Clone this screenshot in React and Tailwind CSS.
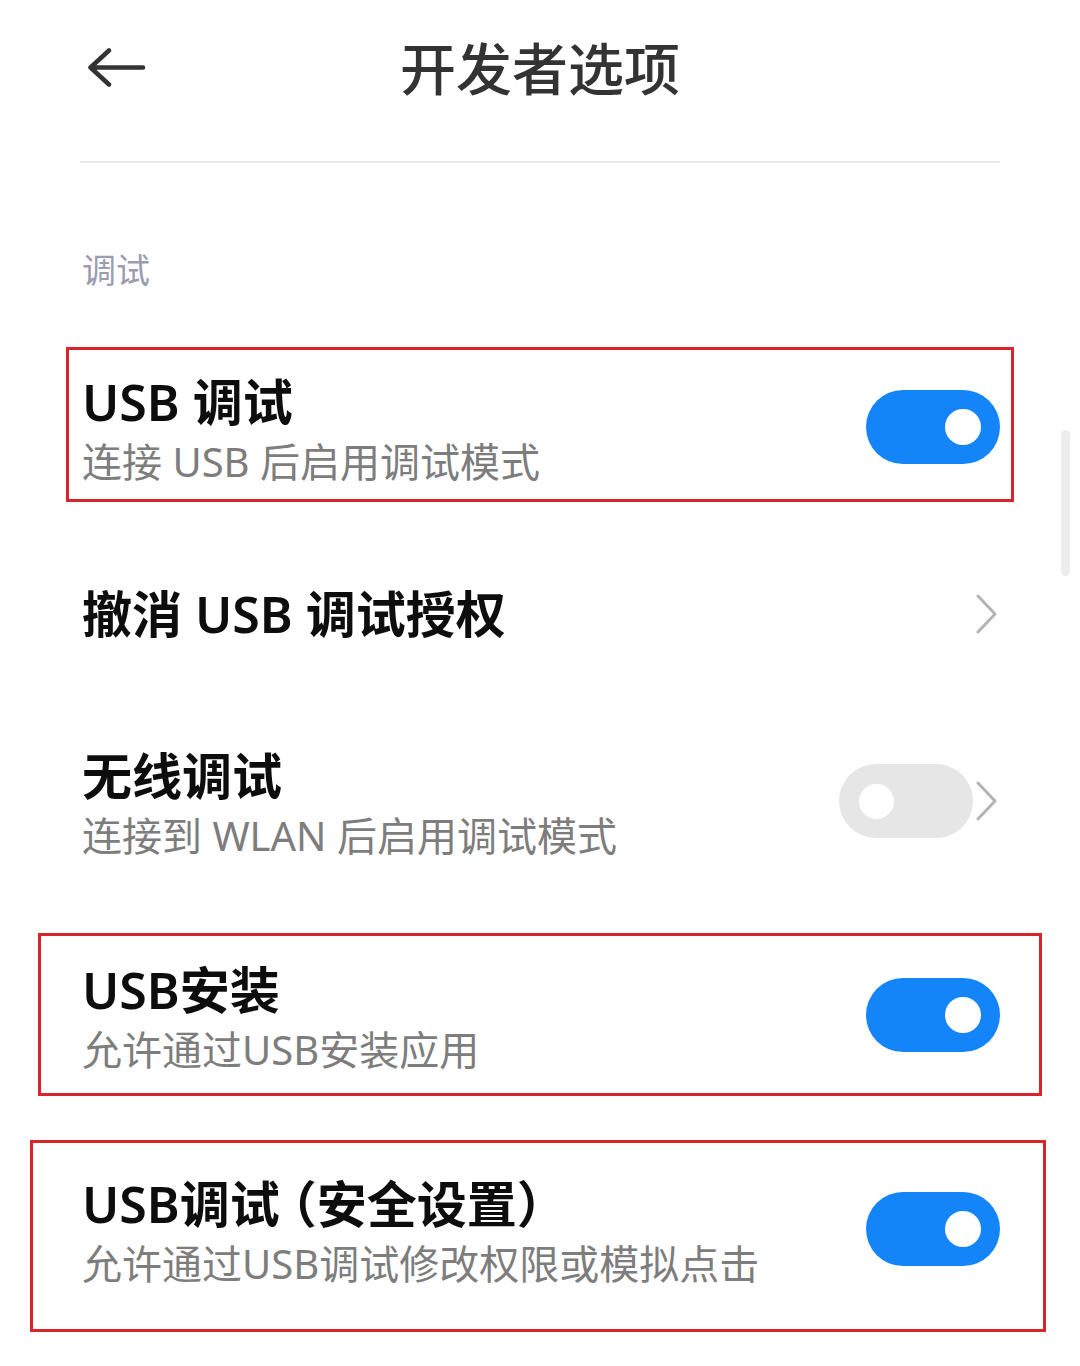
import React from 'react';

const Chevron = () => (
  <svg width="22" height="40" viewBox="0 0 22 40" fill="none" className="shrink-0">
    <path d="M2 2 L19 20 L2 38" stroke="#b4b4b4" strokeWidth="3" strokeLinecap="round" strokeLinejoin="round" />
  </svg>
);

function Toggle({ on }) {
  return on ? (
    <div className="flex h-[74px] w-[134px] shrink-0 items-center justify-end rounded-full bg-[#1485f8] pr-[19px]">
      <div className="h-[36px] w-[36px] rounded-full bg-white" />
    </div>
  ) : (
    <div className="flex h-[74px] w-[134px] shrink-0 items-center rounded-full bg-[#e6e6e6] pl-[20px]">
      <div className="h-[35px] w-[35px] rounded-full bg-white" />
    </div>
  );
}

function Row({ title, sub, right, box, height = 'h-[214px]' }) {
  return (
    <div className={`relative flex ${height} items-center pl-[82px] pr-[80px]`}>
      <div className={`flex-1 ${sub ? 'mt-[10px]' : ''}`}>
        <div className="text-[50px] font-semibold leading-[60px] text-[#0d0d0d]">{title}</div>
        {sub && <div className="text-[40px] leading-[60px] text-[#7d7d7d]">{sub}</div>}
      </div>
      {right}
      {box && <div className={`pointer-events-none absolute border-[3px] border-[#d8242d] ${box}`} />}
    </div>
  );
}

export default function App() {
  return (
    <div className="relative min-h-[1366px] w-[1080px] overflow-hidden bg-white font-['Noto_Sans','Noto_Sans_CJK_SC',sans-serif]">
      {/* header */}
      <div className="grid h-[136px] grid-cols-[1fr_auto_1fr] items-center">
        <div className="pl-[88px]">
          <svg width="58" height="40" viewBox="0 0 58 40" fill="none">
            <path d="M21 2.5 L2.5 19.5 L21 36.5 M2.5 19.5 H55" stroke="#333" strokeWidth="4.5" strokeLinecap="round" strokeLinejoin="round" />
          </svg>
        </div>
        <div className="text-[56px] font-medium leading-[60px] text-[#333]">开发者选项</div>
        <div />
      </div>
      <div className="mx-[80px] mt-[25px] h-[2px] bg-[#e8e8e8]" />

      <div className="mt-[90px] pl-[82px] text-[34px] leading-[34px] text-[#9a9caf]">调试</div>

      <div className="mt-[33px]">
        <Row
          title="USB 调试"
          sub="连接 USB 后启用调试模式"
          right={<Toggle on />}
          box="top-[27px] bottom-[32px] left-[66px] right-[66px]"
        />
        <Row
          title="撤消 USB 调试授权"
          height="h-[160px]"
          right={<div className="pr-[2px]"><Chevron /></div>}
        />
        <Row
          title="无线调试"
          sub="连接到 WLAN 后启用调试模式"
          right={
            <div className="flex items-center gap-[3px] pr-[2px]">
              <Toggle />
              <Chevron />
            </div>
          }
        />
        <Row
          title="USB安装"
          sub="允许通过USB安装应用"
          right={<Toggle on />}
          box="top-[25px] bottom-[26px] left-[38px] right-[38px]"
        />
        <Row
          title={
            <span className="[font-feature-settings:'halt']">
              USB调试<span className="ml-[12px]">（</span>安全设置）
            </span>
          }
          sub="允许通过USB调试修改权限或模拟点击"
          right={<Toggle on />}
          box="top-[18px] bottom-[4px] left-[30px] right-[34px]"
        />
      </div>

      {/* scrollbar */}
      <div className="absolute left-[1061px] top-[430px] h-[146px] w-[9px] rounded-full bg-[#ededed]" />
    </div>
  );
}
